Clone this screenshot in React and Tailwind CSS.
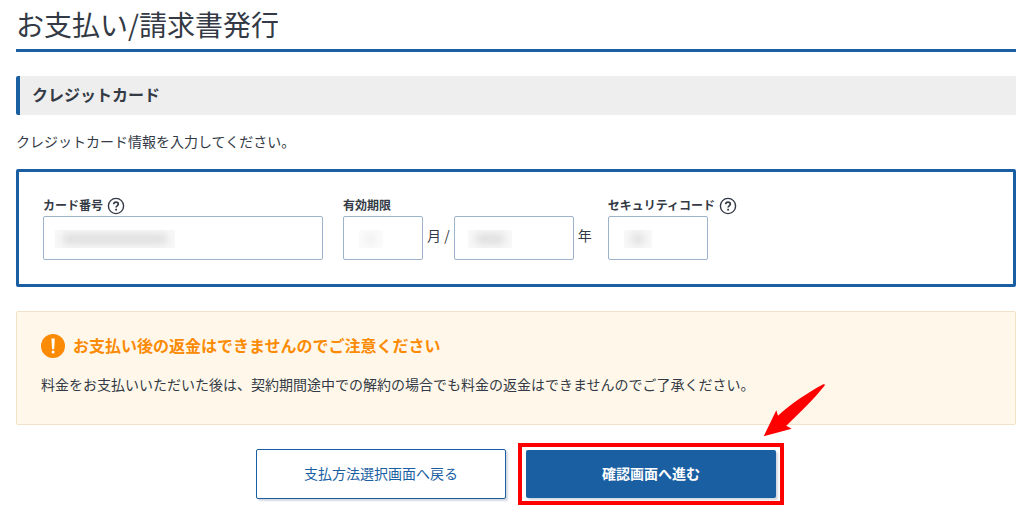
import { useId } from 'react';

function HelpIcon() {
  return (
    <svg viewBox="0 0 18 18" className="h-[18px] w-[18px]" fill="none" stroke="currentColor" aria-hidden="true">
      <circle cx="9" cy="9" r="7.6" strokeWidth="1.4" />
      <path d="M6.7 7.3C6.8 5.9 7.7 5.2 9 5.2s2.3.8 2.3 1.9c0 1.7-2.2 1.7-2.2 3.5" strokeWidth="1.7" />
      <path d="M9.1 11.7v1.8" strokeWidth="1.8" />
    </svg>
  );
}

function AlertIcon() {
  return (
    <svg viewBox="0 0 24 24" className="h-6 w-6 shrink-0" aria-hidden="true">
      <circle cx="12" cy="12" r="12" fill="#fb8a04" />
      <path d="M10.400 4.600h3.400l-.6 10.600h-2.100z" fill="#fff" />
      <circle cx="12.100" cy="18" r="1.500" fill="#fff" />
    </svg>
  );
}

function Label({ htmlFor, children, help }) {
  return (
    <div className="flex h-5 items-center gap-1">
      <label htmlFor={htmlFor} className="pb-0.5 text-xs leading-4 font-bold whitespace-nowrap">
        {children}
      </label>
      {help && (
        <button type="button" aria-label={help}>
          <HelpIcon />
        </button>
      )}
    </div>
  );
}

// Text box whose value is masked with a soft grey patch
function MaskedInput({ id, label, width, mask }) {
  return (
    <div className={`relative max-w-full ${width}`}>
      <input
        id={id}
        type="text"
        aria-label={label}
        className="block h-11 w-full rounded-xs border border-[#9db3cb] bg-white px-3 text-sm"
      />
      <span className={`pointer-events-none absolute top-3.5 h-[18px] overflow-hidden bg-[#f7f8f7] ${mask}`}>
        <span className="absolute inset-x-2 inset-y-1 bg-[#dcdcdc] blur-[4px]" />
      </span>
    </div>
  );
}

function CardForm() {
  const id = useId();

  return (
    <div className="mt-4 flex flex-wrap gap-x-4 gap-y-4 rounded-xs border-3 border-[#1b5fa3] p-6">
      <div className="mr-1">
        <Label htmlFor={`${id}-number`} help="カード番号について">カード番号</Label>
        <MaskedInput id={`${id}-number`} width="w-[280px]" mask="left-3 w-[120px]" />
      </div>

      <div>
        <Label htmlFor={`${id}-month`}>有効期限</Label>
        <div className="flex items-center gap-1">
          <MaskedInput id={`${id}-month`} width="w-20" mask="left-4 w-6 opacity-50" />
          <span className="pb-1.5 text-sm">月 /</span>
          <MaskedInput id={`${id}-year`} label="有効期限（年）" width="w-[120px]" mask="left-3.5 w-11" />
          <span className="pb-1.5 text-sm">年</span>
        </div>
      </div>

      <div>
        <Label htmlFor={`${id}-code`} help="セキュリティコードについて">セキュリティコード</Label>
        <MaskedInput id={`${id}-code`} width="w-[100px]" mask="left-4 w-7" />
      </div>
    </div>
  );
}

function Notice() {
  return (
    <div className="mt-6 rounded-xs border border-[#f0e3c8] bg-[#fff8ea] px-6 pt-[22px] pb-7">
      <h3 className="flex items-center gap-2 text-base leading-6 font-bold text-[#fb8a04]">
        <AlertIcon />
        <span className="pb-0.5 leading-[22px]">お支払い後の返金はできませんのでご注意ください</span>
      </h3>
      <p className="mt-3.5 text-sm leading-6">
        料金をお支払いいただいた後は、契約期間途中での解約の場合でも料金の返金はできませんのでご了承ください。
      </p>
    </div>
  );
}

function Actions() {
  return (
    <div className="mt-6 flex items-center justify-center gap-5">
      <button
        type="button"
        className="h-[50px] w-[250px] rounded-xs border border-[#1b5fa3] bg-white pb-0.5 text-sm text-[#1b5fa3] shadow-[2px_2px_2px_#d5d9e0]"
      >
        支払方法選択画面へ戻る
      </button>

      <div className="relative">
        <button
          type="button"
          className="block h-12 w-[250px] rounded-xs bg-[#1b5fa3] pb-0.5 text-sm font-bold text-white shadow-[2px_2px_2px_#d5d9e0]"
        >
          確認画面へ進む
        </button>
        {/* Highlight frame and arrow */}
        <span className="pointer-events-none absolute -inset-x-2 -inset-y-[7px] border-4 border-[#fe0000]" />
        <svg
          viewBox="0 0 63 55"
          className="pointer-events-none absolute -top-[67px] left-[237px] h-[55px] w-[63px]"
          aria-hidden="true"
        >
          <path
            d="M.7 53.3L13.3 27.3L15 32.7C28 21 44 10 60.3 1.3Q62.500 .8 61.700 2.600C51 16 37 30 23.300 42.700L28.700 45.700Z"
            fill="#fe0000"
          />
        </svg>
      </div>
    </div>
  );
}

export default function App() {
  return (
    <main className="pr-5 pb-4 pl-4 font-['Noto_Sans_CJK_JP',sans-serif] text-[#333a45]" lang="ja">
      <h1 className="border-b-3 border-[#1b5fa3] pt-1 pb-1 text-[28px] leading-[41px]">
        お支払い/請求書発行
      </h1>
      <h2 className="mt-6 rounded-l-xs border-l-4 border-[#1b5fa3] bg-[#eeeeee] px-3 pt-[7px] pb-[9px] text-base leading-[23px] font-bold">
        クレジットカード
      </h2>
      <p className="mt-3.5 text-sm leading-6">クレジットカード情報を入力してください。</p>
      <CardForm />
      <Notice />
      <Actions />
    </main>
  );
}
